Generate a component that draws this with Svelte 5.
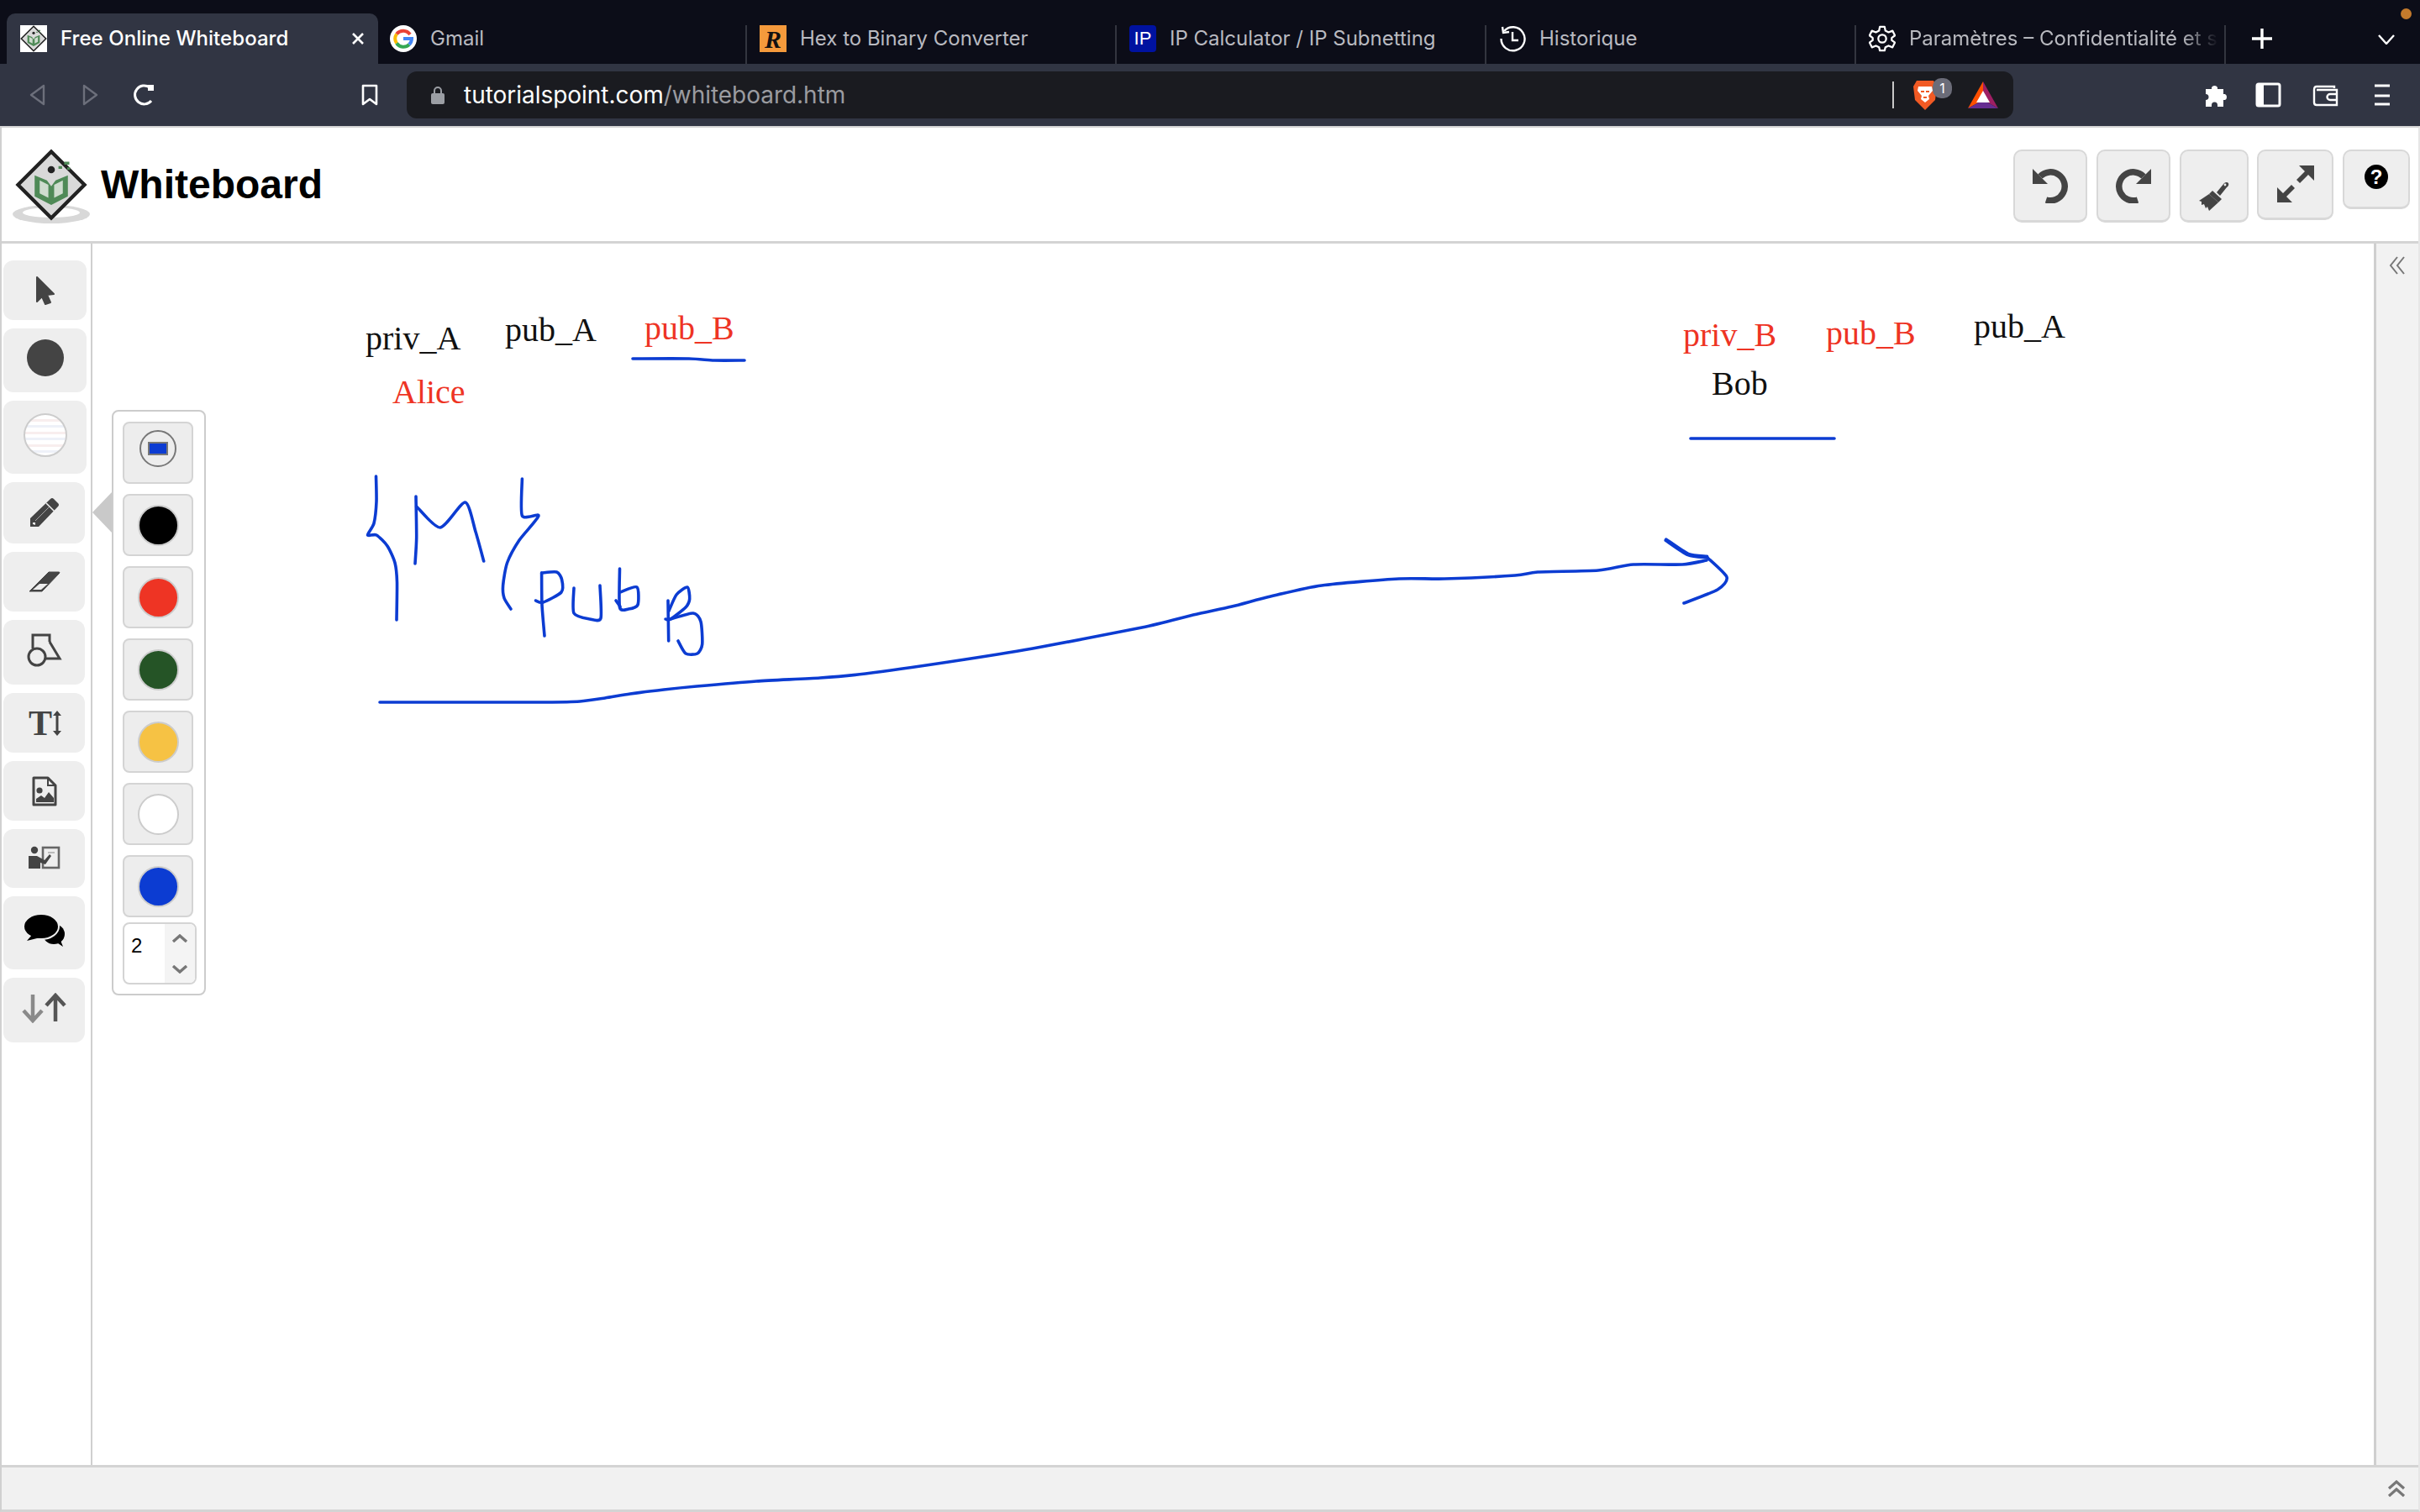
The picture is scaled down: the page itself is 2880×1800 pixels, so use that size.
<script>
	const tabs = [
		{ title: "Free Online Whiteboard", icon: "tp", active: true },
		{ title: "Gmail", icon: "google" },
		{ title: "Hex to Binary Converter", icon: "r" },
		{ title: "IP Calculator / IP Subnetting", icon: "ip" },
		{ title: "Historique", icon: "history" },
		{ title: "Paramètres – Confidentialité et sécurité", icon: "gear", fade: true }
	];

	// lift = how far the icon sits above the middle of its button
	const tools = [
		{ id: "cursor", h: 71, w: 99, lift: 0 },
		{ id: "dot", h: 76, w: 99, lift: 6 },
		{ id: "fill", h: 87, w: 99, lift: 6 },
		{ id: "pencil", h: 73, w: 97, lift: 2 },
		{ id: "eraser", h: 71, w: 97, lift: 0 },
		{ id: "shapes", h: 77, w: 97, lift: 6 },
		{ id: "text", h: 71, w: 97, lift: 0 },
		{ id: "image", h: 71, w: 97, lift: 0 },
		{ id: "teacher", h: 70, w: 97, lift: 2 },
		{ id: "chat", h: 87, w: 97, lift: 6 },
		{ id: "arrows", h: 77, w: 97, lift: 6 }
	];

	const swatches = ["#000000", "#ee3424", "#255426", "#f6c244", "#ffffff", "#0c3cd2"];

	const labels = [
		{ text: "priv_A", x: 435, y: 416, color: "#111" },
		{ text: "pub_A", x: 601, y: 406, color: "#111" },
		{ text: "pub_B", x: 767, y: 404, color: "#ee3424" },
		{ text: "Alice", x: 467, y: 480, color: "#ee3424" },
		{ text: "priv_B", x: 2003, y: 412, color: "#ee3424" },
		{ text: "pub_B", x: 2173, y: 410, color: "#ee3424" },
		{ text: "pub_A", x: 2349, y: 402, color: "#111" },
		{ text: "Bob", x: 2037, y: 470, color: "#111" }
	];

	// pen strokes, full page coordinates
	const strokes = [
		[[753, 427], [820, 427], [850, 429], [886, 429]],
		[[2012, 522], [2183, 522]],
		[[447.5, 567], [448, 597], [445, 623], [437.5, 637], [448, 637], [461, 650], [470, 670], [472.5, 693], [472, 738]],
		[[495, 591], [495.7, 640], [494, 671]],
		[[495.7, 603], [524, 628], [553.6, 598], [566, 633], [575.7, 668]],
		[[621.4, 570], [621.4, 614], [641, 614], [618, 643], [603.6, 670], [598.6, 697], [600, 712], [608, 725]],
		[[644.6, 682], [645, 720], [648, 757]],
		[[644.6, 682], [662.5, 681], [668.6, 690], [668, 705], [646.4, 717], [637.5, 715]],
		[[683, 700], [683, 730], [702, 737], [715, 736], [714, 697]],
		[[737.5, 677], [737.5, 723], [748, 725], [759, 720], [758, 699], [738, 705]],
		[[733, 715], [738, 722]],
		[[795, 715], [795.7, 763]],
		[[795.7, 728], [805, 708], [818, 699], [820.7, 713], [816, 723], [798, 737], [792, 737]],
		[[798, 737], [825, 730], [834, 740], [835.7, 767], [830, 778], [816, 778], [807, 763]],
		[[452, 836], [560, 836], [650, 836], [690, 835], [720, 831], [750, 826], [790, 821], [829, 817], [900, 811], [976, 807], [1030, 802], [1129, 788], [1229, 772], [1359, 747], [1420, 732], [1466, 722], [1512, 710], [1573, 697], [1665, 689], [1719, 689], [1803, 685], [1830, 681], [1902, 679], [1944, 672], [2002, 672], [2031, 667]],
		[[2031, 663], [2055, 687], [2044, 702], [2004, 718]]
	];
	const arrowHead = [[1983, 643], [2009, 660], [2031, 663]];

	function smooth(pts) {
		let d = `M${pts[0][0]} ${pts[0][1]}`;
		for (let i = 0; i < pts.length - 1; i++) {
			const p0 = pts[i - 1] || pts[i];
			const p1 = pts[i];
			const p2 = pts[i + 1];
			const p3 = pts[i + 2] || p2;
			const k = 0.12;
			d += ` C${p1[0] + (p2[0] - p0[0]) * k} ${p1[1] + (p2[1] - p0[1]) * k} ${p2[0] - (p3[0] - p1[0]) * k} ${p2[1] - (p3[1] - p1[1]) * k} ${p2[0]} ${p2[1]}`;
		}
		return d;
	}
</script>

{#snippet tpLogo()}
	<polygon points="50,4 96,50 50,96 4,50" fill="#d9d9d9" stroke="#222" stroke-width="5" />
	<circle cx="50" cy="29" r="5" fill="#222" />
	<path d="M27 37 L27 66 L50 78 L73 66 L73 37 L56 44 L50 52 L44 44 Z" fill="#4f8a57" />
	<path d="M34 44 L34 62 L46 68 L46 50 Z M66 44 L66 62 L54 68 L54 50 Z" fill="#cfdccf" />
	<path d="M60 24 h5 v4 h-5z M68 18 h7 v4 h-7z M72 26 h4 v3 h-4z" fill="#4f8a57" />
{/snippet}

{#snippet tabIcon(kind)}
	{#if kind === "tp"}
		<svg class="favicon" viewBox="0 0 100 100"><rect width="100" height="100" fill="#fff" />{@render tpLogo()}</svg>
	{:else if kind === "google"}
		<svg class="favicon" viewBox="0 0 32 32">
			<circle cx="16" cy="16" r="16" fill="#fff" />
			<path d="M24 11 A10 10 0 0 0 8 10.5" fill="none" stroke="#ea4335" stroke-width="4" />
			<path d="M8 10.5 A10 10 0 0 0 8 21.5" fill="none" stroke="#fbbc05" stroke-width="4" />
			<path d="M8 21.5 A10 10 0 0 0 23 23" fill="none" stroke="#34a853" stroke-width="4" />
			<path d="M23 23 A10 10 0 0 0 26 16 H16" fill="none" stroke="#4285f4" stroke-width="4" />
		</svg>
	{:else if kind === "r"}
		<span class="favicon fav-r">R</span>
	{:else if kind === "ip"}
		<span class="favicon fav-ip">IP</span>
	{:else if kind === "history"}
		<svg class="favicon" viewBox="0 0 32 32" fill="none" stroke="#fff" stroke-width="2.4">
			<path d="M6 7 A14 14 0 1 1 2.5 16" />
			<path d="M4 2 L5 9 L12 8" />
			<path d="M16 8 V18 H23" />
		</svg>
	{:else}
		<svg class="favicon gear" viewBox="0 0 34 34" fill="none" stroke="#fff" stroke-width="2.4" stroke-linejoin="round">
			<circle cx="17" cy="17" r="5" />
			<path d="M14 2 H20 L21 7 L25 9 L30 7 L33 13 L29 16 V19 L33 22 L30 28 L25 26 L21 28 L20 32 H14 L13 28 L9 26 L4 28 L1 22 L5 19 V16 L1 13 L4 7 L9 9 L13 7 Z" />
		</svg>
	{/if}
{/snippet}

{#snippet toolIcon(id)}
	{#if id === "cursor"}
		<svg width="24" height="36" viewBox="0 0 24 36"><path d="M2 2 L22 22 L14 23 L18 32 L12 34 L8 25 L2 31 Z" fill="#444" stroke="#444" stroke-width="2" stroke-linejoin="round" /></svg>
	{:else if id === "dot"}
		<span class="dot"></span>
	{:else if id === "fill"}
		<span class="stripes"></span>
	{:else if id === "pencil"}
		<svg width="36" height="36" viewBox="0 0 36 36">
			<path d="M1 25 L25 2 Q27 0 29 2 L34 7 Q36 9 34 11 L11 35 L1 35 Z" fill="#444" />
			<path d="M20 7 L30 17" stroke="#eee" stroke-width="1.6" />
			<path d="M7 28 L24 11" stroke="#bbb" stroke-width="0.8" />
			<path d="M4 30 L7 30 L7 33 L4 32 Z" fill="#eee" />
		</svg>
	{:else if id === "eraser"}
		<svg width="38" height="26" viewBox="0 0 38 26">
			<path d="M1 24 L24 1 H36 Q38 1 36 3 L16 24 Z" fill="#444" stroke="#444" stroke-linejoin="round" />
			<path d="M5 22 L13 15 H23 L15 22 Z" fill="#eee" />
		</svg>
	{:else if id === "shapes"}
		<svg width="42" height="40" viewBox="0 0 42 40" fill="none" stroke="#444" stroke-width="3">
			<path d="M7 18 V2 H27 V10" />
			<path d="M27 10 L39 30 H21" />
			<circle cx="12" cy="28" r="10" />
		</svg>
	{:else if id === "text"}
		<span class="t-icon">
			<span class="t-glyph">T</span>
			<svg width="12" height="34" viewBox="0 0 12 34">
				<path d="M6 4 V30" stroke="#444" stroke-width="3" />
				<path d="M1 8 L6 2 L11 8 Z M1 26 L6 32 L11 26 Z" fill="#444" />
			</svg>
		</span>
	{:else if id === "image"}
		<svg width="30" height="36" viewBox="0 0 30 36">
			<path d="M2 2 H19 L28 11 V34 H2 Z" fill="none" stroke="#444" stroke-width="3" stroke-linejoin="round" />
			<path d="M19 2 V11 H28" fill="none" stroke="#444" stroke-width="2" />
			<circle cx="9" cy="17" r="3.6" fill="#444" />
			<path d="M5 31 V27 L11 23 L15 26 L20 19 L26 26 V31 Z" fill="#444" />
		</svg>
	{:else if id === "teacher"}
		<svg width="38" height="28" viewBox="0 0 38 28">
			<rect x="17" y="2" width="19" height="24" fill="none" stroke="#666" stroke-width="2.6" />
			<circle cx="7" cy="5" r="4.2" fill="#444" />
			<path d="M0 12 H10 L19 17 L25 10 L27 12 L20 22 L14 20 V27 H0 Z" fill="#444" />
			<path d="M23 8 H31" stroke="#999" stroke-width="1.2" />
		</svg>
	{:else if id === "chat"}
		<svg width="50" height="42" viewBox="0 0 50 42">
			<ellipse cx="36" cy="25" rx="13" ry="12" fill="#000" />
			<path d="M38 34 L47 40 L43 30 Z" fill="#000" />
			<ellipse cx="21" cy="16" rx="21" ry="15" fill="#000" stroke="#eee" stroke-width="2" />
			<path d="M10 26 L4 33 L20 29 Z" fill="#000" />
		</svg>
	{:else}
		<svg width="54" height="36" viewBox="0 0 54 36" fill="none" stroke-width="4.5">
			<path d="M13 2 V32 M2 21 L13 33 L24 21" stroke="#8a8a8a" />
			<path d="M40 34 V4 M29 15 L40 3 L51 15" stroke="#555" />
		</svg>
	{/if}
{/snippet}

<div class="window">
	<div class="tabbar">
		{#each tabs as tab}
			<div class="tab" class:active={tab.active}>
				{@render tabIcon(tab.icon)}
				<span class="tab-title" class:fade={tab.fade}>{tab.title}</span>
				{#if tab.active}
					<svg class="tab-close" width="18" height="18" viewBox="0 0 18 18"><path d="M3 3 L15 15 M15 3 L3 15" stroke="#fff" stroke-width="2.6" /></svg>
				{/if}
			</div>
		{/each}
		<svg class="new-tab" width="24" height="24" viewBox="0 0 24 24"><path d="M12 0 V24 M0 12 H24" stroke="#fff" stroke-width="3.4" /></svg>
		<svg class="tab-list" width="20" height="12" viewBox="0 0 20 12"><path d="M1 1 L10 11 L19 1" fill="none" stroke="#fff" stroke-width="2.4" /></svg>
		<span class="rec-dot"></span>
	</div>

	<div class="toolbar">
		<svg class="nav" width="20" height="26" viewBox="0 0 20 26"><path d="M18 2 L3 13 L18 24 Z" fill="none" stroke="#6c6f7b" stroke-width="2.4" stroke-linejoin="round" /></svg>
		<svg class="nav fwd" width="20" height="26" viewBox="0 0 20 26"><path d="M2 2 L17 13 L2 24 Z" fill="none" stroke="#6c6f7b" stroke-width="2.4" stroke-linejoin="round" /></svg>
		<svg class="nav reload" width="28" height="28" viewBox="0 0 28 28" fill="none" stroke="#fff" stroke-width="3"><path d="M22 21 A11 11 0 1 1 20 5" /><path d="M18 2 H25 V9 H18 Z" fill="#fff" stroke="none" /></svg>
		<svg class="nav bookmark" width="20" height="26" viewBox="0 0 20 26"><path d="M2 2 H18 V24 L10 18 L2 24 Z" fill="none" stroke="#fff" stroke-width="2.6" stroke-linejoin="round" /></svg>
		<div class="omnibox">
			<svg class="lock" width="16" height="22" viewBox="0 0 16 22"><path d="M4 10 V6 A4 4 0 0 1 12 6 V10" fill="none" stroke="#9b9ea4" stroke-width="2" /><rect y="9" width="16" height="13" rx="2" fill="#9b9ea4" /></svg>
			<span class="url"><b>tutorialspoint.com</b>/whiteboard.htm</span>
			<span class="omni-sep"></span>
			<div class="brave">
				<svg width="30" height="36" viewBox="0 0 30 36">
					<path d="M5 1 H25 L29 8 L27 24 L15 36 L3 24 L1 8 Z" fill="#f15a24" />
					<path d="M7 8 H23 L24 13 L19 19 L20 23 L15 27 L10 23 L11 19 L6 13 Z" fill="#fff" />
					<path d="M10 13 h4 v2 h-4z M16 13 h4 v2 h-4z M13 20 h4 v2 h-4z" fill="#f15a24" />
				</svg>
				<span class="badge">1</span>
			</div>
			<svg class="bat" width="36" height="32" viewBox="0 0 36 32">
				<path d="M18 0 L36 32 L18 22 Z" fill="#9e1f63" />
				<path d="M18 0 L0 32 L18 22 Z" fill="#ff5000" />
				<path d="M0 32 H36 L18 22 Z" fill="#662d91" />
				<path d="M18 11 L26 25 H10 Z" fill="#fff" />
			</svg>
		</div>
		<div class="browser-actions">
			<svg width="30" height="30" viewBox="0 0 30 30"><path d="M11 6 A4 4 0 0 1 18 6 V8 H25 V14 H27 A4 4 0 0 1 27 21 H25 V29 H18 V27 A3 3 0 0 0 11 27 V29 H4 V21 A3 3 0 0 0 4 14 V8 H11 Z" fill="#fff" /></svg>
			<svg class="side" width="31" height="30" viewBox="0 0 31 30"><rect x="2" y="2" width="27" height="26" rx="2" fill="none" stroke="#fff" stroke-width="3" /><rect x="2" y="2" width="8" height="26" fill="#fff" /></svg>
			<svg class="wallet" width="31" height="27" viewBox="0 0 31 27" fill="none" stroke="#fff" stroke-width="2.4"><path d="M26 5 V3 H5 Q2 3 2 7 V22 Q2 25 5 25 H29 V7 H5" /><path d="M29 12 H21 A3.5 3.5 0 0 0 21 19 H29" /></svg>
			<svg class="menu" width="18" height="26" viewBox="0 0 18 26"><path d="M0 2 H18 M0 14 H18 M0 24 H18" stroke="#fff" stroke-width="3" /></svg>
		</div>
	</div>

	<div class="page">
		<header class="header">
			<div class="brand">
				<svg class="logo" width="96" height="92" viewBox="0 0 96 92">
					<ellipse cx="47" cy="78" rx="46" ry="11" fill="#d8d8d8" />
					<ellipse cx="47" cy="76" rx="34" ry="6" fill="#fff" />
					<svg x="3" y="0" width="88" height="86" viewBox="0 0 100 100">{@render tpLogo()}</svg>
				</svg>
				<h1>Whiteboard</h1>
			</div>
			<div class="actions">
				<button class="action a-88">
					<svg width="42" height="42" viewBox="0 0 42 42" fill="none"><path d="M9 10 A17 17 0 1 1 16 38" stroke="#444" stroke-width="7.5" /><path d="M0 1 V19 H18 Z" fill="#444" /></svg>
				</button>
				<button class="action a-88">
					<svg width="42" height="42" viewBox="0 0 42 42" fill="none"><path d="M33 10 A17 17 0 1 0 26 38" stroke="#444" stroke-width="7.5" /><path d="M42 1 V19 H24 Z" fill="#444" /></svg>
				</button>
				<button class="action a-82 brush">
					<svg width="36" height="36" viewBox="0 0 36 36">
						<path d="M21 14 L30 3 Q33 1 35 3 Q36 6 33 8 L25 18 Z" fill="#444" />
						<path d="M16 12 L27 22 L23 26 L12 16 Z" fill="#444" />
						<path d="M12 16 L23 26 L12 36 L10 31 L8 33 L6 28 L3 29 L3 25 L0 24 Z" fill="#444" />
						<circle cx="31" cy="5" r="1.4" fill="#eee" />
					</svg>
				</button>
				<button class="action a-91">
					<svg width="44" height="44" viewBox="0 0 44 44"><path d="M26 0 H44 V18 L37 11 L27 21 L23 17 L33 7 Z M0 44 V26 L7 33 L17 23 L21 27 L11 37 L18 44 Z" fill="#444" /></svg>
				</button>
				<button class="action a-80">
					<span class="help">?</span>
				</button>
			</div>
		</header>

		<div class="main">
			<nav class="sidebar">
				{#each tools as tool}
					<button class="tool" style="height: {tool.h}px; width: {tool.w}px; padding-bottom: {tool.lift}px;">
						{@render toolIcon(tool.id)}
					</button>
				{/each}
			</nav>

			<div class="board">
				<svg class="sketch" width="2715" height="1454" viewBox="110 290 2715 1454">
					{#each labels as label}
						<text x={label.x} y={label.y} fill={label.color} class="label">{label.text}</text>
					{/each}
					{#each strokes as s}
						<path d={smooth(s)} fill="none" stroke="#0c3cd2" stroke-width="3.6" stroke-linecap="round" stroke-linejoin="round" />
					{/each}
					<path d={smooth(arrowHead)} fill="none" stroke="#0c3cd2" stroke-width="5" stroke-linecap="round" />
				</svg>

				<span class="pointer"></span>
				<div class="palette">
					<button class="swatch">
						<span class="current"><span></span></span>
					</button>
					{#each swatches as color}
						<button class="swatch">
							<span class="colour" style="background: {color};"></span>
						</button>
					{/each}
					<div class="stepper">
						<span class="value">2</span>
						<span class="spin">
							<svg width="20" height="10" viewBox="0 0 20 10"><path d="M2 9 L10 2 L18 9" fill="none" stroke="#777" stroke-width="3.4" /></svg>
							<svg width="20" height="10" viewBox="0 0 20 10"><path d="M2 1 L10 8 L18 1" fill="none" stroke="#777" stroke-width="3.4" /></svg>
						</span>
					</div>
				</div>
			</div>

			<aside class="side-panel">
				<svg width="20" height="22" viewBox="0 0 20 22" fill="none" stroke="#777" stroke-width="2"><path d="M10 1 L2 11 L10 21 M18 1 L10 11 L18 21" /></svg>
			</aside>
		</div>

		<footer class="footer">
			<svg width="22" height="20" viewBox="0 0 22 20" fill="none" stroke="#777" stroke-width="3.2"><path d="M2 10 L11 2 L20 10 M2 19 L11 11 L20 19" /></svg>
		</footer>
	</div>
</div>

<style>
	:global(body) {
		margin: 0;
		background: #fff;
	}
	.window {
		width: 2880px;
		height: 1800px;
		display: flex;
		flex-direction: column;
		overflow: hidden;
		font-family: Inter, "Liberation Sans", sans-serif;
	}

	.tabbar {
		height: 76px;
		flex: none;
		background: #0c0d18;
		display: flex;
		align-items: flex-end;
		padding-left: 8px;
		box-sizing: border-box;
		position: relative;
	}
	.tab {
		width: 440px;
		height: 60px;
		flex: none;
		box-sizing: border-box;
		padding: 14px 14px 14px 16px;
		display: flex;
		align-items: flex-start;
		gap: 16px;
		color: #b9bac0;
		font-size: 24px;
		line-height: 32px;
		position: relative;
		white-space: nowrap;
	}
	.tab::after {
		content: "";
		position: absolute;
		right: -1px;
		top: 14px;
		bottom: 0;
		width: 2px;
		background: #33353f;
	}
	.tab.active {
		width: 442px;
		margin-right: -2px;
		background: #313543;
		color: #fff;
		font-weight: 500;
		letter-spacing: 0.05px;
		border-radius: 10px 10px 0 0;
	}
	.tab.active::after {
		display: none;
	}
	.tab-title {
		overflow: hidden;
		min-width: 0;
		line-height: 32px;
	}
	.tab-title.fade {
		mask-image: linear-gradient(to right, #000 88%, transparent 100%);
		width: 368px;
		flex: none;
	}
	.tab-close {
		position: absolute;
		right: 15px;
		top: 21px;
	}
	.favicon {
		width: 32px;
		height: 32px;
		flex: none;
		display: block;
	}
	.fav-r {
		background: #f59a3c;
		color: #111;
		font: italic bold 30px/34px "Liberation Serif", serif;
		text-align: center;
	}
	.fav-ip {
		display: flex;
		align-items: center;
		justify-content: center;
		background: #0012a0;
		color: #fff;
		border-radius: 4px;
		font: 22px "Liberation Sans", sans-serif;
	}
	.new-tab {
		position: absolute;
		left: 2680px;
		top: 34px;
	}
	.tab-list {
		position: absolute;
		left: 2830px;
		top: 41px;
	}
	.rec-dot {
		position: absolute;
		left: 2857px;
		top: 10px;
		width: 13px;
		height: 13px;
		border-radius: 50%;
		background: #c47a2c;
	}

	.toolbar {
		height: 74px;
		flex: none;
		background: #313543;
		display: flex;
		align-items: center;
		box-sizing: border-box;
		padding-left: 34px;
	}
	.nav {
		flex: none;
	}
	.fwd {
		margin-left: 44px;
	}
	.reload {
		margin-left: 40px;
	}
	.bookmark {
		margin-left: 244px;
	}
	.omnibox {
		margin-left: 34px;
		width: 1912px;
		height: 56px;
		flex: none;
		background: #1a1b20;
		border-radius: 12px;
		display: flex;
		align-items: center;
		box-sizing: border-box;
		padding-left: 29px;
		position: relative;
	}
	.lock {
		flex: none;
	}
	.url {
		margin-left: 23px;
		font-size: 28px;
		letter-spacing: -0.03px;
		color: #9a9ba0;
		white-space: nowrap;
	}
	.url b {
		color: #fff;
		font-weight: 400;
	}
	.omni-sep {
		position: absolute;
		left: 1768px;
		top: 12px;
		width: 2px;
		height: 32px;
		background: #c8c8c8;
	}
	.brave {
		position: absolute;
		left: 1792px;
		top: 10px;
	}
	.badge {
		position: absolute;
		left: 24px;
		top: -2px;
		width: 23px;
		height: 24px;
		border-radius: 10px;
		background: #6b6c78;
		color: #fff;
		font-size: 16px;
		line-height: 24px;
		text-align: center;
	}
	.bat {
		position: absolute;
		left: 1858px;
		top: 12px;
	}
	.browser-actions {
		margin-left: 225px;
		display: flex;
		align-items: center;
	}
	.side {
		margin-left: 33px;
	}
	.wallet {
		margin-left: 37px;
	}
	.menu {
		margin-left: 43px;
	}

	.page {
		flex: 1;
		display: flex;
		flex-direction: column;
		min-height: 0;
		box-sizing: border-box;
		border-top: 2px solid #d4d4d4;
		border-left: 2px solid #d0d0d0;
		border-right: 2px solid #e6e6e6;
		border-bottom: 3px solid #d4d4d4;
	}
	.header {
		height: 138px;
		flex: none;
		box-sizing: border-box;
		border-bottom: 3px solid #d4d4d4;
		display: flex;
		justify-content: space-between;
		align-items: flex-start;
		padding-top: 26px;
		padding-right: 10px;
	}
	.brand {
		display: flex;
		align-items: flex-start;
		padding-left: 12px;
	}
	.logo {
		flex: none;
		margin-top: -1px;
	}
	.brand h1 {
		margin: 12px 0 0 10px;
		font: bold 48px/60px "Liberation Sans", sans-serif;
		color: #000;
	}
	.actions {
		display: flex;
		gap: 10.75px;
		align-items: flex-start;
	}
	.action {
		box-sizing: border-box;
		border: 2px solid #d8d8d8;
		border-bottom-width: 3px;
		border-radius: 10px;
		background: #eee;
		padding: 20px 0 0;
		display: flex;
		justify-content: center;
		align-items: flex-start;
	}
	.a-88 {
		width: 88px;
		height: 87px;
	}
	.a-82 {
		width: 82px;
		height: 87px;
	}
	.brush {
		padding-top: 35px;
	}
	.a-91 {
		width: 91px;
		height: 84px;
		padding-top: 17px;
	}
	.a-80 {
		width: 80px;
		height: 71px;
		padding-top: 16px;
	}
	.help {
		width: 28px;
		height: 29px;
		border-radius: 50%;
		background: #000;
		color: #fff;
		font: bold 24px/29px "Liberation Sans", sans-serif;
		text-align: center;
	}

	.main {
		flex: 1;
		display: flex;
		min-height: 0;
	}
	.sidebar {
		width: 108px;
		flex: none;
		box-sizing: border-box;
		border-right: 2px solid #cfcfcf;
		padding: 20px 0 0 2px;
		display: flex;
		flex-direction: column;
		gap: 10px;
	}
	.tool {
		border: none;
		border-radius: 12px;
		background: #eee;
		padding: 0;
		box-sizing: border-box;
		display: flex;
		align-items: center;
		justify-content: center;
		flex: none;
	}
	.dot {
		width: 44px;
		height: 44px;
		border-radius: 50%;
		background: #444;
	}
	.stripes {
		width: 48px;
		height: 48px;
		border-radius: 50%;
		border: 2px solid #ccc;
		background: repeating-linear-gradient(#fff 0 5px, #f8eeee 5px 8px, #fff 8px 12px, #eef1f8 12px 15px);
	}
	.t-icon {
		display: flex;
		align-items: center;
		gap: 0;
		margin-left: 3px;
	}
	.t-glyph {
		font: bold 42px/42px "Liberation Serif", serif;
		color: #444;
	}

	.board {
		flex: 1;
		position: relative;
		min-width: 0;
	}
	.sketch {
		position: absolute;
		inset: 0;
	}
	.label {
		font: 40px "Liberation Serif", serif;
	}
	.pointer {
		position: absolute;
		left: 0;
		top: 296px;
		border-style: solid;
		border-width: 24px 23px 24px 0;
		border-color: transparent #c9c9c9 transparent transparent;
	}
	.palette {
		position: absolute;
		left: 23px;
		top: 198px;
		width: 112px;
		height: 697px;
		box-sizing: border-box;
		background: #fff;
		border: 2px solid #ccc;
		border-radius: 8px;
		padding: 12px 0 0 11px;
		display: flex;
		flex-direction: column;
		gap: 12px;
	}
	.swatch {
		width: 84px;
		height: 74px;
		flex: none;
		box-sizing: border-box;
		border: 2px solid #d4d4d4;
		border-radius: 8px;
		background: #ededed;
		padding: 0;
		display: flex;
		align-items: center;
		justify-content: center;
	}
	.colour {
		width: 49px;
		height: 49px;
		box-sizing: border-box;
		border-radius: 50%;
		border: 2px solid #ccc;
	}
	.current {
		width: 44px;
		height: 44px;
		box-sizing: border-box;
		border: 2px solid #777;
		border-radius: 50%;
		margin-top: -10px;
		display: flex;
		align-items: center;
		justify-content: center;
	}
	.current span {
		width: 24px;
		height: 16px;
		box-sizing: border-box;
		background: #0c3cd2;
		border: 2px solid #777;
	}
	.stepper {
		width: 88px;
		height: 74px;
		flex: none;
		box-sizing: border-box;
		margin-top: -6px;
		border: 2px solid #d4d4d4;
		border-radius: 8px;
		background: #fff;
		display: flex;
		overflow: hidden;
	}
	.value {
		flex: 1;
		padding: 11px 0 0 8px;
		font: 24px/30px "Liberation Sans", sans-serif;
		color: #000;
	}
	.spin {
		width: 36px;
		background: #f4f4f4;
		display: flex;
		flex-direction: column;
		align-items: center;
		gap: 27px;
		padding-top: 12px;
		box-sizing: border-box;
	}

	.side-panel {
		width: 53px;
		flex: none;
		box-sizing: border-box;
		border-left: 3px solid #cfcfcf;
		background: #f2f2f2;
		padding: 15px 0 0 15px;
	}
	.footer {
		height: 53px;
		flex: none;
		box-sizing: border-box;
		border-top: 3px solid #d4d4d4;
		background: #f1f1f1;
		display: flex;
		justify-content: flex-end;
		padding: 15px 15px 0 0;
	}
</style>
